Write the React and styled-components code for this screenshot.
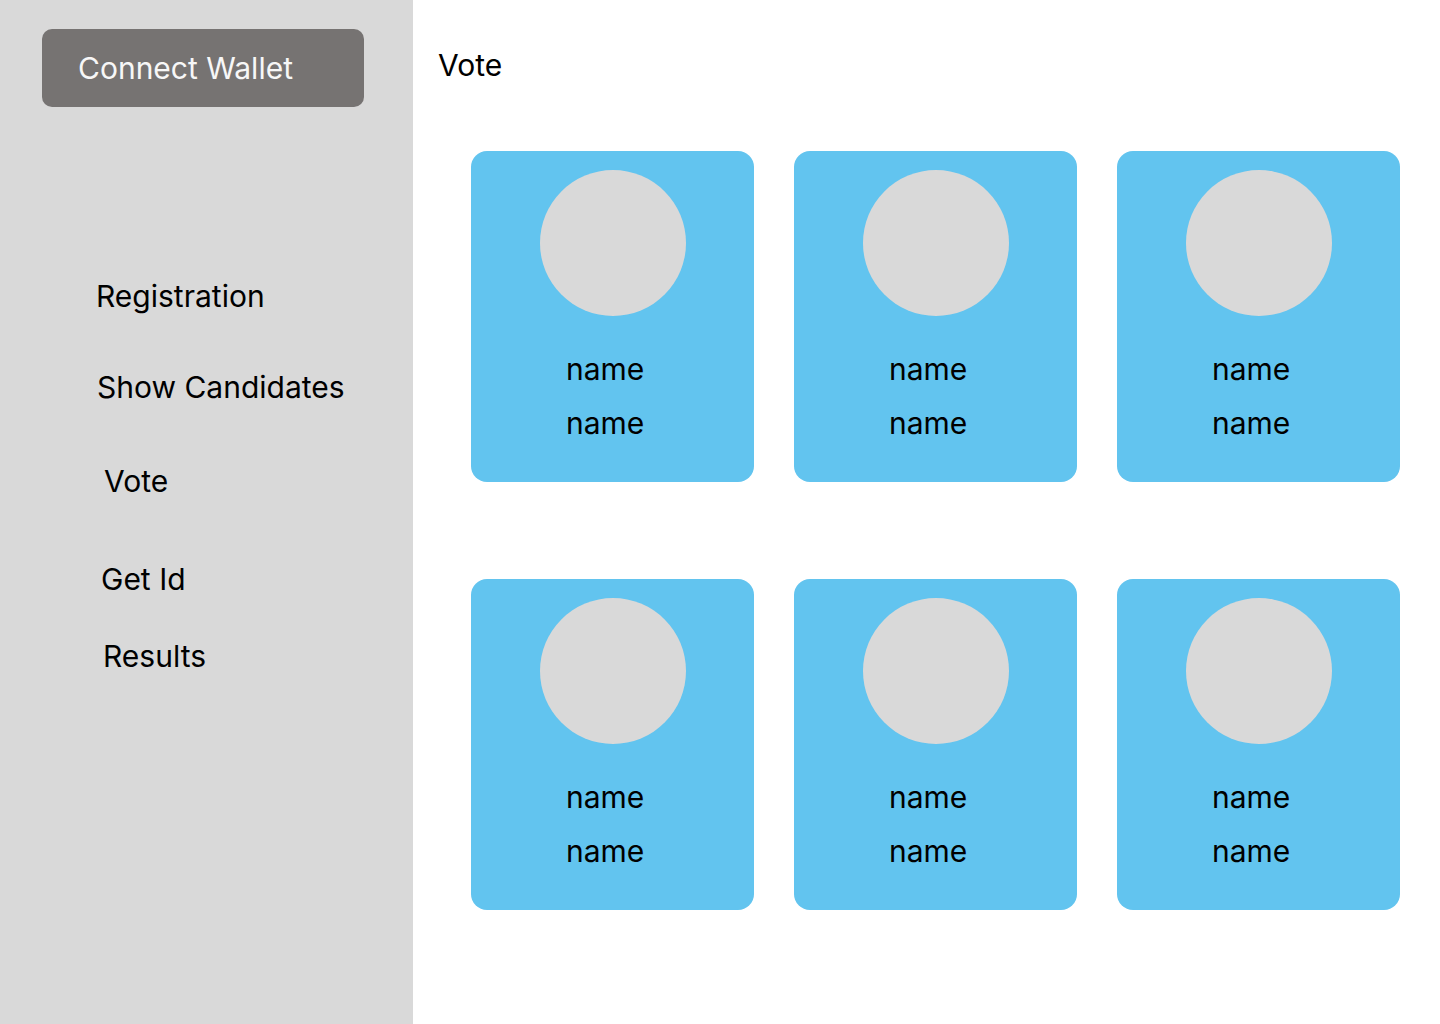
import React from 'react'
import styled, { createGlobalStyle } from 'styled-components'

const GlobalStyle = createGlobalStyle`
    * { box-sizing: border-box; }
    body {
        margin: 0;
        font-family: Inter, "Noto Sans", sans-serif;
        background: #ffffff;
        color: #000000;
    }
`

const Layout = styled.div`
    display: flex;
    width: 1440px;
    height: 1024px;
`

const Sidebar = styled.aside`
    width: 413px;
    flex-shrink: 0;
    background-color: #D9D9D9;
    padding: 29px 0 0 42px;
    display: flex;
    flex-direction: column;
`

const WalletButton = styled.button`
    width: 322px;
    height: 78px;
    border: none;
    border-radius: 10px;
    background-color: #767372;
    color: #F7F7F7;
    font-family: inherit;
    font-size: 30px;
    text-align: left;
    padding: 0 0 0 36px;
    cursor: pointer;
`

const Nav = styled.nav`
    display: flex;
    flex-direction: column;
`

const NavItem = styled.a`
    display: block;
    font-size: 30px;
    line-height: 34px;
    height: 34px;
    color: #000000;
    margin-top: ${props => props.$top}px;
    margin-left: ${props => props.$indent}px;
    cursor: pointer;
`

const Main = styled.main`
    flex: 1;
    padding: 48px 0 0 25px;
`

const Title = styled.h1`
    margin: 0;
    font-size: 30px;
    font-weight: 400;
    line-height: 34px;
`

const CardGrid = styled.div`
    display: grid;
    grid-template-columns: repeat(3, 283px);
    grid-auto-rows: 331px;
    column-gap: 40px;
    row-gap: 97px;
    margin: 69px 0 0 33px;
`

const Card = styled.div`
    background-color: #62C4EF;
    border-radius: 16px;
    padding-top: 19px;
    display: flex;
    flex-direction: column;
`

const Avatar = styled.div`
    width: 146px;
    height: 146px;
    border-radius: 50%;
    background-color: #D9D9D9;
    margin-left: 69px;
`

const NameLine = styled.div`
    font-size: 30px;
    line-height: 34px;
    padding-left: 95px;
    margin-top: ${props => props.$top}px;
`

const navItems = [
    { label: 'Registration', top: 172, indent: 54 },
    { label: 'Show Candidates', top: 57, indent: 55 },
    { label: 'Vote', top: 60, indent: 62 },
    { label: 'Get Id', top: 64, indent: 59 },
    { label: 'Results', top: 43, indent: 61 },
]

const candidates = [1, 2, 3, 4, 5, 6]

const App = () => {
    return (
        <>
            <GlobalStyle />
            <Layout>
                <Sidebar>
                    <WalletButton>Connect Wallet</WalletButton>
                    <Nav>
                        {navItems.map(item => (
                            <NavItem key={item.label} $top={item.top} $indent={item.indent}>
                                {item.label}
                            </NavItem>
                        ))}
                    </Nav>
                </Sidebar>
                <Main>
                    <Title>Vote</Title>
                    <CardGrid>
                        {candidates.map(id => (
                            <Card key={id}>
                                <Avatar />
                                <NameLine $top={36}>name</NameLine>
                                <NameLine $top={20}>name</NameLine>
                            </Card>
                        ))}
                    </CardGrid>
                </Main>
            </Layout>
        </>
    )
}

export default App
